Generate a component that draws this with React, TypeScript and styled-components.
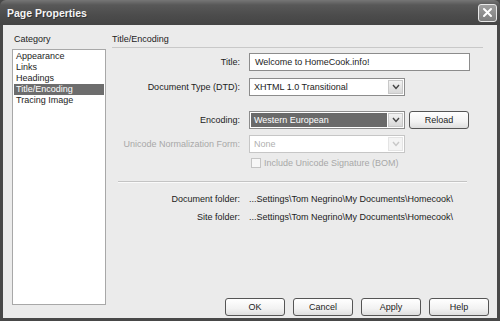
import React from "react";
import styled, { createGlobalStyle } from "styled-components";

const GlobalStyle = createGlobalStyle`
  html, body {
    margin: 0;
    padding: 0;
    background: #3a3a3a;
  }
  body {
    font-family: "Liberation Sans", Arial, sans-serif;
    font-size: 9px;
    color: #1c1c1c;
  }
`;

const Window = styled.div`
  width: 500px;
  height: 321px;
  box-sizing: border-box;
  display: flex;
  flex-direction: column;
  background: #484848;
  padding: 0 3px 3px 3px;
`;

const TitleBar = styled.div`
  height: 25px;
  margin: 0 -3px;
  padding: 0 3px 0 7px;
  display: flex;
  align-items: center;
  justify-content: space-between;
  background: linear-gradient(to bottom, #767676 0%, #585858 20%, #4c4c4c 60%, #444 100%);
  border-radius: 6px 6px 0 0;
`;

const Caption = styled.span`
  color: #f4f4f4;
  font-family: "Liberation Sans", Arial, sans-serif;
  font-weight: bold;
  font-size: 10.5px;
  text-shadow: 1px 1px 0 #333;
`;

const CloseButton = styled.div`
  width: 19px;
  height: 18px;
  box-sizing: border-box;
  border: 1px solid #e8e8e8;
  border-radius: 3px;
  background: linear-gradient(to bottom, #a0a0a0, #7e7e7e);
  display: flex;
  align-items: center;
  justify-content: center;
`;

const Content = styled.div`
  flex: 1;
  display: flex;
  gap: 6px;
  background: #ebebeb;
  padding: 8px 8px 2px 9px;
`;

const SideColumn = styled.div`
  width: 94px;
  display: flex;
  flex-direction: column;
  padding-bottom: 11px;
`;

const Heading = styled.div`
  height: 12px;
  line-height: 12px;
  padding-left: 2px;
  margin-bottom: 4px;
`;

const CategoryList = styled.div`
  flex: 1;
  background: #fff;
  border: 1px solid #a8a8a8;
  padding: 1px 1px;
`;

const CategoryItem = styled.div<{ $selected?: boolean }>`
  height: 11px;
  line-height: 11px;
  padding-left: 2px;
  background: ${(p) => (p.$selected ? "#6d6d6d" : "transparent")};
  color: ${(p) => (p.$selected ? "#fff" : "#1c1c1c")};
`;

const MainColumn = styled.div`
  flex: 1;
  display: flex;
  flex-direction: column;
`;

const SectionHeader = styled.div`
  height: 14px;
  line-height: 12px;
  border-bottom: 1px solid #c8c8c8;
  margin-right: 6px;
  margin-bottom: 5px;
`;

const Row = styled.div<{ $top?: number }>`
  display: grid;
  grid-template-columns: 128px auto;
  column-gap: 9px;
  align-items: center;
  margin-top: ${(p) => p.$top ?? 0}px;
`;

const Label = styled.span<{ $disabled?: boolean }>`
  text-align: right;
  color: ${(p) => (p.$disabled ? "#a8a8a8" : "#1c1c1c")};
  white-space: nowrap;
`;

const Controls = styled.div`
  display: flex;
  align-items: center;
  gap: 4px;
`;

const TextInput = styled.div`
  width: 221px;
  height: 18px;
  box-sizing: border-box;
  border: 1px solid #8c8c8c;
  background: #fff;
  padding: 0 5px;
  line-height: 16px;
`;

const Select = styled.div<{ $disabled?: boolean }>`
  width: 156px;
  height: 18px;
  box-sizing: border-box;
  border: 1px solid ${(p) => (p.$disabled ? "#c6c6c6" : "#8c8c8c")};
  background: #fff;
  display: flex;
  padding: 1px;
`;

const SelectValue = styled.div<{ $highlight?: boolean; $disabled?: boolean }>`
  flex: 1;
  line-height: 14px;
  padding: 0 3px;
  background: ${(p) => (p.$highlight ? "#6a6a6a" : "transparent")};
  color: ${(p) => (p.$highlight ? "#fff" : p.$disabled ? "#b0b0b0" : "#1c1c1c")};
`;

const Arrow = styled.div<{ $disabled?: boolean }>`
  width: 15px;
  margin-left: 1px;
  box-sizing: border-box;
  border: 1px solid ${(p) => (p.$disabled ? "#e4e4e4" : "#c8c8c8")};
  background: ${(p) => (p.$disabled ? "#f4f4f4" : "linear-gradient(to bottom, #f2f2f2, #d8d8d8)")};
  display: flex;
  align-items: center;
  justify-content: center;
`;

const Button = styled.div`
  width: 60px;
  height: 18px;
  box-sizing: border-box;
  border: 1px solid #555;
  border-radius: 3px;
  background: linear-gradient(to bottom, #ffffff 0%, #f2f2f2 60%, #dedede 100%);
  display: flex;
  align-items: center;
  justify-content: center;
  color: #1c1c1c;
`;

const CheckRow = styled.div`
  display: flex;
  align-items: center;
  gap: 3px;
  padding-left: 2px;
  color: #a8a8a8;
`;

const CheckBox = styled.div`
  width: 10px;
  height: 10px;
  box-sizing: border-box;
  border: 1px solid #c4c4c4;
  background: #f7f7f7;
`;

const Separator = styled.div`
  height: 0;
  border-top: 1px solid #c4c4c4;
  border-bottom: 1px solid #fafafa;
  margin: 13px 22px 0 6px;
`;

const InfoRow = styled.div<{ $top: number }>`
  display: grid;
  grid-template-columns: 128px auto;
  column-gap: 9px;
  margin-top: ${(p) => p.$top}px;
  line-height: 12px;
`;

const Footer = styled.div`
  margin-top: auto;
  display: flex;
  justify-content: flex-end;
  gap: 8px;
`;

const Chevron: React.FC<{ color: string }> = ({ color }) => (
  <svg width="8" height="6" viewBox="0 0 8 6">
    <path d="M1 1 L4 4.5 L7 1" fill="none" stroke={color} strokeWidth="1.4" />
  </svg>
);

const DropDown: React.FC<{ value: string; highlight?: boolean; disabled?: boolean }> = ({
  value,
  highlight,
  disabled,
}) => (
  <Select $disabled={disabled}>
    <SelectValue $highlight={highlight} $disabled={disabled}>
      {value}
    </SelectValue>
    <Arrow $disabled={disabled}>
      <Chevron color={disabled ? "#c8c8c8" : "#444"} />
    </Arrow>
  </Select>
);

const categories = ["Appearance", "Links", "Headings", "Title/Encoding", "Tracing Image"];

const folder = "...Settings\\Tom Negrino\\My Documents\\Homecook\\";

export default function App() {
  return (
    <>
      <GlobalStyle />
      <Window>
        <TitleBar>
          <Caption>Page Properties</Caption>
          <CloseButton>
            <svg width="11" height="11" viewBox="0 0 11 11">
              <path d="M2 2 L9 9 M9 2 L2 9" stroke="#fff" strokeWidth="2" strokeLinecap="round" />
            </svg>
          </CloseButton>
        </TitleBar>
        <Content>
          <SideColumn>
            <Heading>Category</Heading>
            <CategoryList>
              {categories.map((c) => (
                <CategoryItem key={c} $selected={c === "Title/Encoding"}>
                  {c}
                </CategoryItem>
              ))}
            </CategoryList>
          </SideColumn>
          <MainColumn>
            <SectionHeader>Title/Encoding</SectionHeader>
            <Row>
              <Label>Title:</Label>
              <TextInput>Welcome to HomeCook.info!</TextInput>
            </Row>
            <Row $top={7}>
              <Label>Document Type (DTD):</Label>
              <DropDown value="XHTML 1.0 Transitional" />
            </Row>
            <Row $top={15}>
              <Label>Encoding:</Label>
              <Controls>
                <DropDown value="Western European" highlight />
                <Button>Reload</Button>
              </Controls>
            </Row>
            <Row $top={6}>
              <Label $disabled>Unicode Normalization Form:</Label>
              <DropDown value="None" disabled />
            </Row>
            <Row $top={5}>
              <span />
              <CheckRow>
                <CheckBox />
                <span>Include Unicode Signature (BOM)</span>
              </CheckRow>
            </Row>
            <Separator />
            <InfoRow $top={10}>
              <Label>Document folder:</Label>
              <span>{folder}</span>
            </InfoRow>
            <InfoRow $top={6}>
              <Label>Site folder:</Label>
              <span>{folder}</span>
            </InfoRow>
            <Footer>
              <Button>OK</Button>
              <Button>Cancel</Button>
              <Button>Apply</Button>
              <Button>Help</Button>
            </Footer>
          </MainColumn>
        </Content>
      </Window>
    </>
  );
}
